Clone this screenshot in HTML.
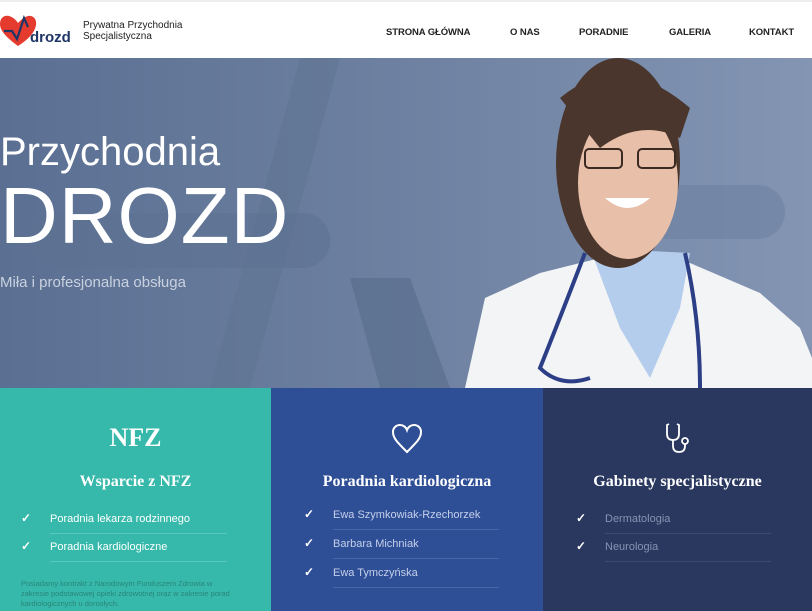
<!DOCTYPE html>
<html><head><meta charset="utf-8"><style>
*{margin:0;padding:0;box-sizing:border-box}
body{width:812px;height:611px;overflow:hidden;font-family:"Liberation Sans",sans-serif;background:#fff;position:relative}
.hdr{position:absolute;top:0;left:0;width:812px;height:58px;background:#fff;border-top:2px solid #eee}
.nav{position:absolute;top:25px;font-size:9.5px;color:#222;font-weight:bold;letter-spacing:-.1px}
.hero{position:absolute;top:58px;left:0;width:812px;height:330px;background:linear-gradient(90deg,#5a6f92 0%,#6c7fa0 45%,#8395b3 100%);overflow:hidden}
.col{position:absolute;top:388px;height:223px;color:#fff;text-align:center}
.col h3{position:absolute;top:85px;width:100%;font-family:"Liberation Serif",serif;font-weight:bold;font-size:16px}
.li{position:absolute;font-size:11px;text-align:left}
.li b{position:absolute;left:-29px;top:-2px;color:#fff;font-size:12px}
.li i{position:absolute;left:0;right:0;height:1px;bottom:-9px}
</style></head><body>
<div class="hdr">
<svg style="position:absolute;left:0;top:12px" width="72" height="36" viewBox="0 0 72 36">
<path d="M18 32 C7 24 0 17 0 10 C0 4 4 1 9 2 C13 3 16 6 18 9 C21 6 24 3 28 2 C33 1 37 5 36 11 C35 18 29 25 18 32Z" fill="#e53b2f"/>
<path d="M4 17 L12 17 L17 25 L24 4 L28 13" fill="none" stroke="#1f3566" stroke-width="2.2"/>
<text x="30" y="28" font-family="Liberation Sans" font-weight="bold" font-size="15" fill="#1f3566">drozd</text>
</svg>
<div style="position:absolute;left:83px;top:18px;font-size:10px;line-height:11px;color:#222">Prywatna Przychodnia<br>Specjalistyczna</div>
<div class="nav" style="left:386px">STRONA GŁÓWNA</div>
<div class="nav" style="left:510px">O NAS</div>
<div class="nav" style="left:579px">PORADNIE</div>
<div class="nav" style="left:669px">GALERIA</div>
<div class="nav" style="left:749px">KONTAKT</div>
</div>
<div class="hero">
<svg style="position:absolute;left:0;top:0" width="812" height="330">
<polygon points="300,0 340,0 250,330 210,330" fill="#5d7190" opacity=".5"/>
<polygon points="350,220 410,220 450,330 380,330" fill="#566a8a" opacity=".6"/>
<rect x="30" y="155" width="300" height="55" rx="27" fill="#5d7192" opacity=".6"/>
<rect x="640" y="127" width="145" height="54" rx="27" fill="#6e81a0" opacity=".6"/>
<path d="M465 330 L485 240 L540 215 L600 200 L690 205 L760 235 L800 270 L812 300 L812 330Z" fill="#f2f4f6"/>
<path d="M590 190 L620 270 L650 320 L680 250 L690 195Z" fill="#b5cdec"/>
<path d="M585 195 Q560 260 540 310 Q560 330 590 320" fill="none" stroke="#2c3f86" stroke-width="4"/>
<path d="M685 195 Q700 260 700 330" fill="none" stroke="#2c3f86" stroke-width="4"/>
<ellipse cx="618" cy="105" rx="62" ry="105" fill="#4a362c"/>
<ellipse cx="628" cy="125" rx="50" ry="76" fill="#e8bfa8"/>
<path d="M560 40 Q620 -10 690 50 L680 80 Q640 60 600 90Z" fill="#4a362c"/>
<rect x="585" y="91" width="37" height="19" rx="4" fill="none" stroke="#3a2a22" stroke-width="2"/>
<rect x="638" y="91" width="37" height="19" rx="4" fill="none" stroke="#3a2a22" stroke-width="2"/>
<path d="M605 140 Q628 160 650 140Z" fill="#fff"/>
</svg>
<div style="position:absolute;left:0;top:72px;font-size:40px;color:#fff;font-weight:300">Przychodnia</div>
<div style="position:absolute;left:0;top:112px;font-size:80px;color:#fff;letter-spacing:1px">DROZD</div>
<div style="position:absolute;left:0;top:216px;font-size:15px;color:#c9d1df">Miła i profesjonalna obsługa</div>
</div>

<div class="col" style="left:0;width:271px;background:#36b9aa">
<div style="position:absolute;top:35px;width:100%;font-family:'Liberation Serif',serif;font-weight:bold;font-size:26px">NFZ</div>
<h3>Wsparcie z NFZ</h3>
<div class="li" style="left:50px;top:125px;width:177px"><b>✓</b>Poradnia lekarza rodzinnego<i style="background:#5ac8bb"></i></div>
<div class="li" style="left:50px;top:153px;width:177px"><b>✓</b>Poradnia kardiologiczne<i style="background:#5ac8bb"></i></div>
<div style="position:absolute;left:21px;top:191px;width:220px;font-size:7.5px;line-height:10px;text-align:left;color:#2a8579">Posiadamy kontrakt z Narodowym Funduszem Zdrowia w zakresie podstawowej opieki zdrowotnej oraz w zakresie porad kardiologicznych u dorosłych.</div>
</div>
<div class="col" style="left:271px;width:272px;background:#2e4e96">
<svg style="position:absolute;left:120px;top:36px" width="32" height="30" viewBox="0 0 32 30"><path d="M16 28 C6 18 2 14 2 8 C2 4 5 1 9 1 C12 1 15 3 16 6 C17 3 20 1 23 1 C27 1 30 4 30 8 C30 14 26 18 16 28Z" fill="none" stroke="#fff" stroke-width="2"/></svg>
<h3>Poradnia kardiologiczna</h3>
<div class="li" style="left:62px;top:121px;width:166px;color:#c5d0ea"><b>✓</b>Ewa Szymkowiak-Rzechorzek<i style="background:#4a66a8"></i></div>
<div class="li" style="left:62px;top:150px;width:166px;color:#c5d0ea"><b>✓</b>Barbara Michniak<i style="background:#4a66a8"></i></div>
<div class="li" style="left:62px;top:179px;width:166px;color:#c5d0ea"><b>✓</b>Ewa Tymczyńska<i style="background:#4a66a8"></i></div>
</div>
<div class="col" style="left:543px;width:269px;background:#2a385f">
<svg style="position:absolute;left:120px;top:34px" width="32" height="32" viewBox="0 0 32 32" fill="none" stroke="#fff" stroke-width="1.8"><path d="M6 2 L4 3 L4 12 Q4 18 10 18 Q16 18 16 12 L16 3 L14 2"/><path d="M10 18 L10 24 Q10 30 16 30 Q22 30 22 24 L22 22"/><circle cx="22" cy="19" r="3"/></svg>
<h3>Gabinety specjalistyczne</h3>
<div class="li" style="left:62px;top:125px;width:166px;color:#8893b3"><b>✓</b>Dermatologia<i style="background:#3d4a72"></i></div>
<div class="li" style="left:62px;top:153px;width:166px;color:#8893b3"><b>✓</b>Neurologia<i style="background:#3d4a72"></i></div>
</div>
</body></html>
